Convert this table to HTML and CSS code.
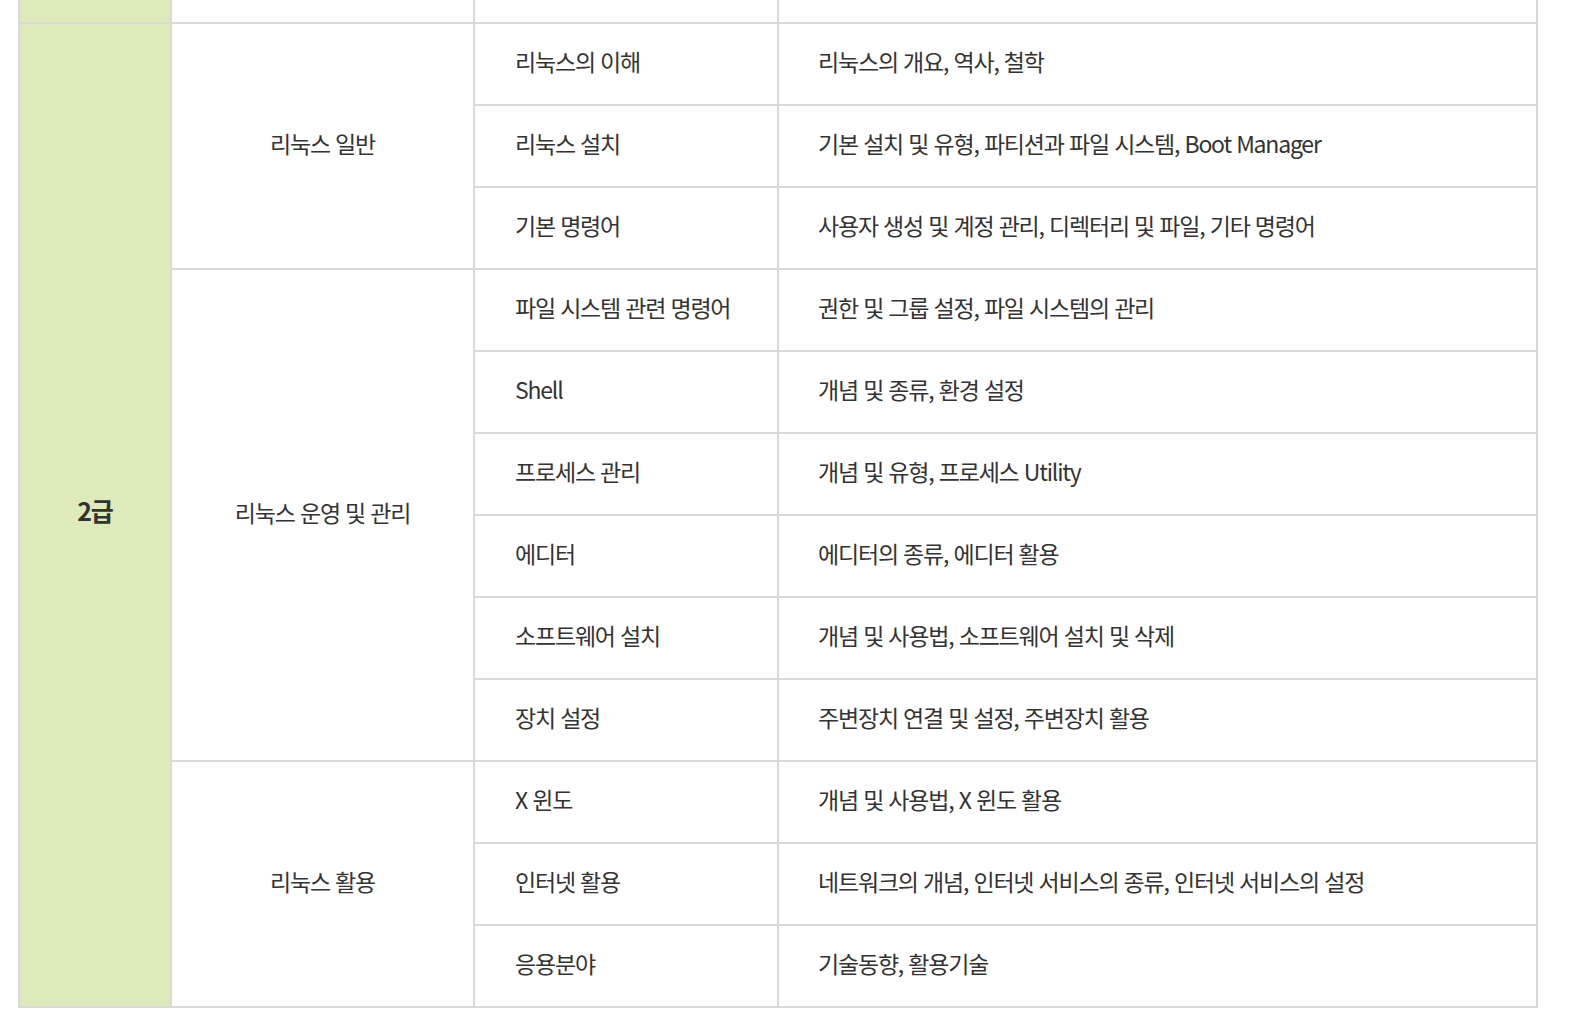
FILE: index.html
```html
<!DOCTYPE html>
<html lang="ko">
<head>
<meta charset="utf-8">
<link rel="stylesheet" href="styles.css">
</head>
<body>
<div class="wrap">
<table class="exam">
  <colgroup>
    <col class="c1"><col class="c2"><col class="c3"><col class="c4">
  </colgroup>
  <tbody>
    <tr class="cut">
      <td class="grade"></td><td></td><td></td><td></td>
    </tr>
    <tr>
      <td class="grade" rowspan="12">2급</td>
      <td class="area" rowspan="3">리눅스 일반</td>
      <td class="sub">리눅스의 이해</td>
      <td class="desc">리눅스의 개요, 역사, 철학</td>
    </tr>
    <tr>
      <td class="sub">리눅스 설치</td>
      <td class="desc">기본 설치 및 유형, 파티션과 파일 시스템, Boot Manager</td>
    </tr>
    <tr>
      <td class="sub">기본 명령어</td>
      <td class="desc">사용자 생성 및 계정 관리, 디렉터리 및 파일, 기타 명령어</td>
    </tr>
    <tr>
      <td class="area" rowspan="6">리눅스 운영 및 관리</td>
      <td class="sub">파일 시스템 관련 명령어</td>
      <td class="desc">권한 및 그룹 설정, 파일 시스템의 관리</td>
    </tr>
    <tr>
      <td class="sub">Shell</td>
      <td class="desc">개념 및 종류, 환경 설정</td>
    </tr>
    <tr>
      <td class="sub">프로세스 관리</td>
      <td class="desc">개념 및 유형, 프로세스 Utility</td>
    </tr>
    <tr>
      <td class="sub">에디터</td>
      <td class="desc">에디터의 종류, 에디터 활용</td>
    </tr>
    <tr>
      <td class="sub">소프트웨어 설치</td>
      <td class="desc">개념 및 사용법, 소프트웨어 설치 및 삭제</td>
    </tr>
    <tr>
      <td class="sub">장치 설정</td>
      <td class="desc">주변장치 연결 및 설정, 주변장치 활용</td>
    </tr>
    <tr>
      <td class="area" rowspan="3">리눅스 활용</td>
      <td class="sub">X 윈도</td>
      <td class="desc">개념 및 사용법, X 윈도 활용</td>
    </tr>
    <tr>
      <td class="sub">인터넷 활용</td>
      <td class="desc">네트워크의 개념, 인터넷 서비스의 종류, 인터넷 서비스의 설정</td>
    </tr>
    <tr>
      <td class="sub">응용분야</td>
      <td class="desc">기술동향, 활용기술</td>
    </tr>
  </tbody>
</table>
</div>
</body>
</html>
```
FILE: styles.css
```css
html, body {
  margin: 0;
  padding: 0;
  background: #ffffff;
}
.wrap {
  padding-left: 18px;
}
.exam {
  width: 1520px;
  table-layout: fixed;
  border-collapse: separate;
  border-spacing: 0;
  border-left: 2px solid #d9d9d9;
  font-family: "Noto Sans CJK KR", "Noto Sans", sans-serif;
  font-size: 23px;
  letter-spacing: -1.2px;
  color: #333333;
}
.c1 { width: 152px; }
.c2 { width: 303px; }
.c3 { width: 304px; }
.c4 { width: 759px; }
.exam td {
  border-right: 2px solid #d9d9d9;
  border-bottom: 2px solid #d9d9d9;
  padding: 0 0 4px 0;
  height: 76px;
  vertical-align: middle;
  line-height: 1.2;
}
.exam tr.cut td {
  height: 22px;
  padding: 0;
}
.exam td.grade {
  background: #ddebbb;
  text-align: center;
  font-weight: 700;
  font-size: 25px;
  color: #333333;
  padding-bottom: 10px;
}
.exam td.area {
  text-align: center;
}
.exam td.sub {
  padding-left: 40px;
  text-align: left;
}
.exam td.desc {
  padding-left: 39px;
  text-align: left;
}
```
